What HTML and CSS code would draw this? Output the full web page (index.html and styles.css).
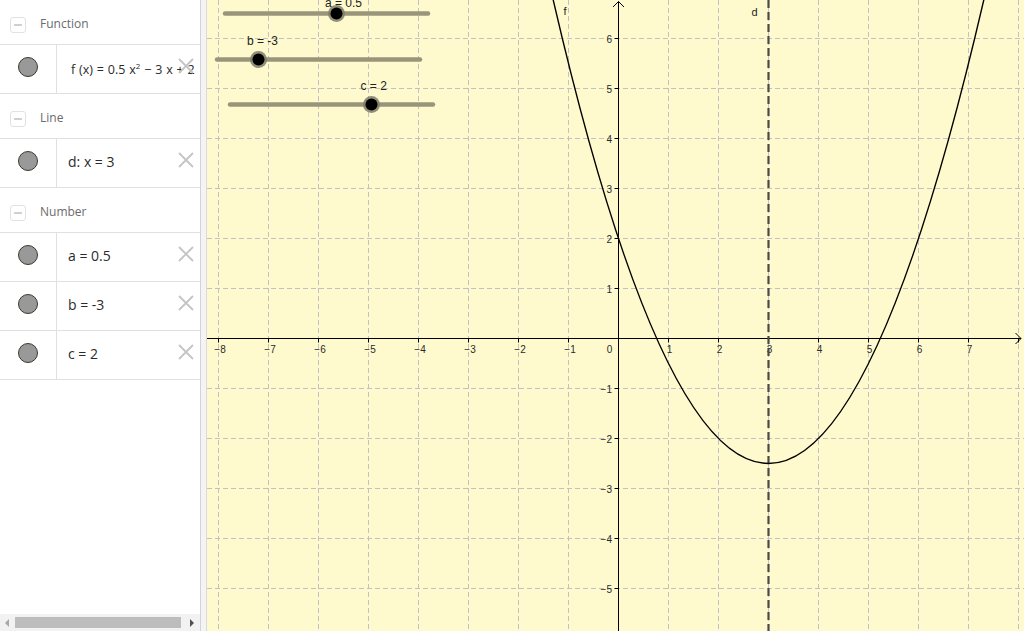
FILE: index.html
```html
<!DOCTYPE html>
<html>
<head>
<meta charset="utf-8">
<link rel="stylesheet" href="styles.css">
</head>
<body>
<div class="app">
  <aside class="sidebar">
    <div class="algebra">
      <div class="group">
        <button class="collapse"><span class="minus"></span></button>
        <span class="group-title">Function</span>
      </div>
      <div class="row">
        <div class="marble-col"><span class="marble"></span></div>
        <div class="content formula"><span class="expr">f (x) = 0.5 x<sup>2</sup> − 3 x + 2</span>
          <svg class="delete" viewBox="0 0 16 16"><path d="M1 1L15 15M15 1L1 15"/></svg>
        </div>
      </div>
      <div class="group">
        <button class="collapse"><span class="minus"></span></button>
        <span class="group-title">Line</span>
      </div>
      <div class="row">
        <div class="marble-col"><span class="marble"></span></div>
        <div class="content"><span class="expr">d: x = 3</span>
          <svg class="delete" viewBox="0 0 16 16"><path d="M1 1L15 15M15 1L1 15"/></svg>
        </div>
      </div>
      <div class="group">
        <button class="collapse"><span class="minus"></span></button>
        <span class="group-title">Number</span>
      </div>
      <div class="row">
        <div class="marble-col"><span class="marble"></span></div>
        <div class="content"><span class="expr">a = 0.5</span>
          <svg class="delete" viewBox="0 0 16 16"><path d="M1 1L15 15M15 1L1 15"/></svg>
        </div>
      </div>
      <div class="row">
        <div class="marble-col"><span class="marble"></span></div>
        <div class="content"><span class="expr">b = -3</span>
          <svg class="delete" viewBox="0 0 16 16"><path d="M1 1L15 15M15 1L1 15"/></svg>
        </div>
      </div>
      <div class="row">
        <div class="marble-col"><span class="marble"></span></div>
        <div class="content"><span class="expr">c = 2</span>
          <svg class="delete" viewBox="0 0 16 16"><path d="M1 1L15 15M15 1L1 15"/></svg>
        </div>
      </div>
    </div>
    <div class="hscroll">
      <span class="arrow-left"></span>
      <div class="track"><div class="thumb"></div></div>
      <span class="arrow-right"></span>
    </div>
  </aside>
  <div class="splitter"></div>
  <main class="graphics">
    <svg class="plot" width="817" height="631" viewBox="207 0 817 631">
      <g class="grid">
        <path d="M218.5 0V631M268.5 0V631M318.5 0V631M368.5 0V631M418.5 0V631M468.5 0V631M518.5 0V631M568.5 0V631M668.5 0V631M718.5 0V631M768.5 0V631M818.5 0V631M868.5 0V631M918.5 0V631M968.5 0V631M1018.5 0V631"/>
        <path d="M207 38.5H1024M207 88.5H1024M207 138.5H1024M207 188.5H1024M207 238.5H1024M207 288.5H1024M207 388.5H1024M207 438.5H1024M207 488.5H1024M207 538.5H1024M207 588.5H1024"/>
      </g>
      <g class="axes">
        <path d="M207 338.5H1021"/>
        <path d="M1015.5 333L1021 338.5L1015.5 344"/>
        <path d="M618.5 631V1.5"/>
        <path d="M613 7L618.5 1.5L624 7"/>
        <path d="M218.5 338.5v4M268.5 338.5v4M318.5 338.5v4M368.5 338.5v4M418.5 338.5v4M468.5 338.5v4M518.5 338.5v4M568.5 338.5v4M668.5 338.5v4M718.5 338.5v4M768.5 338.5v4M818.5 338.5v4M868.5 338.5v4M918.5 338.5v4M968.5 338.5v4M1018.5 338.5v4"/>
        <path d="M614.5 38.5h4M614.5 88.5h4M614.5 138.5h4M614.5 188.5h4M614.5 238.5h4M614.5 288.5h4M614.5 388.5h4M614.5 438.5h4M614.5 488.5h4M614.5 538.5h4M614.5 588.5h4"/>
      </g>
      <g class="xlabels">
        <text x="220" y="353">−8</text>
        <text x="270" y="353">−7</text>
        <text x="320" y="353">−6</text>
        <text x="370" y="353">−5</text>
        <text x="420" y="353">−4</text>
        <text x="470" y="353">−3</text>
        <text x="520" y="353">−2</text>
        <text x="570" y="353">−1</text>
        <text x="609.5" y="353">0</text>
        <text x="669.5" y="353">1</text>
        <text x="719.5" y="353">2</text>
        <text x="769.5" y="353">3</text>
        <text x="819.5" y="353">4</text>
        <text x="869.5" y="353">5</text>
        <text x="919.5" y="353">6</text>
        <text x="969.5" y="353">7</text>
      </g>
      <g class="ylabels">
        <text x="612" y="42.5">6</text>
        <text x="612" y="92.5">5</text>
        <text x="612" y="142.5">4</text>
        <text x="612" y="192.5">3</text>
        <text x="612" y="242.5">2</text>
        <text x="612" y="292.5">1</text>
        <text x="612" y="392.5">−1</text>
        <text x="612" y="442.5">−2</text>
        <text x="612" y="492.5">−3</text>
        <text x="612" y="542.5">−4</text>
        <text x="612" y="592.5">−5</text>
      </g>
      <path class="line-d" d="M768.5 0V631"/>
      <path class="curve" d="M552.165 -4.5Q768.5 931.5 984.835 -4.5"/>
      <text class="obj-label" x="563.5" y="15">f</text>
      <text class="obj-label" x="751.5" y="15.5">d</text>
      <g class="slider">
        <path class="slider-line" d="M225 13.5H428"/>
        <circle class="slider-halo" cx="336.5" cy="13.5" r="8.5"/>
        <circle class="slider-knob" cx="336.5" cy="13.5" r="6"/>
        <text class="slider-label" x="325" y="6.5">a = 0.5</text>
      </g>
      <g class="slider">
        <path class="slider-line" d="M217 59.5H420"/>
        <circle class="slider-halo" cx="258.5" cy="59.5" r="8.5"/>
        <circle class="slider-knob" cx="258.5" cy="59.5" r="6"/>
        <text class="slider-label" x="247" y="44.5">b = -3</text>
      </g>
      <g class="slider">
        <path class="slider-line" d="M230 104.5H433"/>
        <circle class="slider-halo" cx="371.5" cy="104.5" r="8.5"/>
        <circle class="slider-knob" cx="371.5" cy="104.5" r="6"/>
        <text class="slider-label" x="360.5" y="89.5">c = 2</text>
      </g>
    </svg>
  </main>
</div>
</body>
</html>
```

FILE: styles.css
```css
* { box-sizing: border-box; }

html, body {
  margin: 0;
  padding: 0;
  width: 1024px;
  height: 631px;
  overflow: hidden;
  background: #fff;
  font-family: "Open Sans", "Noto Sans", "Liberation Sans", sans-serif;
}

.app {
  display: flex;
  width: 1024px;
  height: 631px;
}

.sidebar {
  width: 201px;
  flex: none;
  height: 631px;
  border-right: 1px solid #d4d4d4;
  display: flex;
  flex-direction: column;
  background: #fff;
}

.algebra {
  flex: 1;
  overflow: hidden;
}

.group {
  height: 45px;
  border-bottom: 1px solid #e0e0e0;
  display: flex;
  align-items: center;
  padding-left: 10px;
  padding-top: 5px;
}

.collapse {
  width: 16px;
  height: 16px;
  border: 1px solid #e2e2e2;
  border-radius: 3px;
  background: #fff;
  padding: 0;
  margin: 0 14px 0 0;
  display: flex;
  align-items: center;
  justify-content: center;
}

.minus {
  display: block;
  width: 8px;
  height: 2px;
  background: #d0d0d0;
}

.group-title {
  font-size: 12px;
  color: #6b6b6b;
  margin-top: -3px;
}

.row {
  height: 49px;
  border-bottom: 1px solid #e0e0e0;
  display: flex;
}

.marble-col {
  width: 57px;
  flex: none;
  border-right: 1px solid #e0e0e0;
  display: flex;
  justify-content: center;
  align-items: flex-start;
  padding-top: 12px;
}

.marble {
  width: 20px;
  height: 20px;
  border-radius: 50%;
  background: #999;
  border: 1px solid #3a3a2a;
}

.content {
  flex: 1;
  position: relative;
  display: flex;
  align-items: center;
  padding-left: 11px;
  padding-bottom: 3px;
  font-size: 14px;
  color: #2b2b2b;
  white-space: nowrap;
  overflow: hidden;
}

.content.formula {
  font-size: 12.5px;
  padding-left: 14px;
  padding-bottom: 0;
  word-spacing: 0.6px;
}

.expr {
  display: inline-block;
}

.expr sup {
  font-size: 8px;
  vertical-align: 5px;
  line-height: 0;
}

.delete {
  position: absolute;
  right: 6px;
  top: 13px;
  width: 16px;
  height: 16px;
}

.delete path {
  stroke: #c4c4c4;
  stroke-width: 1.8;
  fill: none;
}

.hscroll {
  height: 17px;
  flex: none;
  background: #f2f2f2;
  display: flex;
  align-items: center;
  padding: 0 4px 0 4px;
}

.arrow-left {
  width: 0;
  height: 0;
  border-top: 4px solid transparent;
  border-bottom: 4px solid transparent;
  border-right: 4px solid #a8a8a8;
  margin-right: 6px;
  margin-left: 1px;
}

.track {
  flex: 1;
  height: 11px;
}

.thumb {
  width: 166px;
  height: 11px;
  background: #bdbdbd;
}

.arrow-right {
  width: 0;
  height: 0;
  border-top: 4px solid transparent;
  border-bottom: 4px solid transparent;
  border-left: 4px solid #505050;
  margin-left: 9px;
  margin-right: 2px;
}

.splitter {
  width: 6px;
  flex: none;
  background: #f4f4f4;
  border-right: 1px solid #dadada;
}

.graphics {
  width: 817px;
  height: 631px;
  flex: none;
  background: #fffacd;
  overflow: hidden;
}

.plot {
  display: block;
}

.grid path {
  stroke: #c2c2c6;
  stroke-width: 1;
  stroke-dasharray: 5 3;
  fill: none;
}

.axes path {
  stroke: #000;
  stroke-width: 1;
  fill: none;
}

.xlabels text {
  font-family: "Liberation Sans", Arial, sans-serif;
  font-size: 10px;
  fill: #2a2a2a;
  text-anchor: middle;
}

.ylabels text {
  font-family: "Liberation Sans", Arial, sans-serif;
  font-size: 10px;
  fill: #2a2a2a;
  text-anchor: end;
}

.line-d {
  stroke: #4a4a4a;
  stroke-width: 2.2;
  stroke-dasharray: 8 4;
  fill: none;
}

.curve {
  stroke: #000;
  stroke-width: 1.4;
  fill: none;
}

.obj-label {
  font-family: "Liberation Sans", Arial, sans-serif;
  font-size: 11px;
  fill: #222;
}

.slider-line {
  stroke: #99957a;
  stroke-width: 4.5;
  stroke-linecap: round;
  fill: none;
}

.slider-halo {
  fill: #7e7b68;
  opacity: 0.85;
}

.slider-knob {
  fill: #000;
}

.slider-label {
  font-family: "Liberation Sans", Arial, sans-serif;
  font-size: 12px;
  fill: #222;
}
```
